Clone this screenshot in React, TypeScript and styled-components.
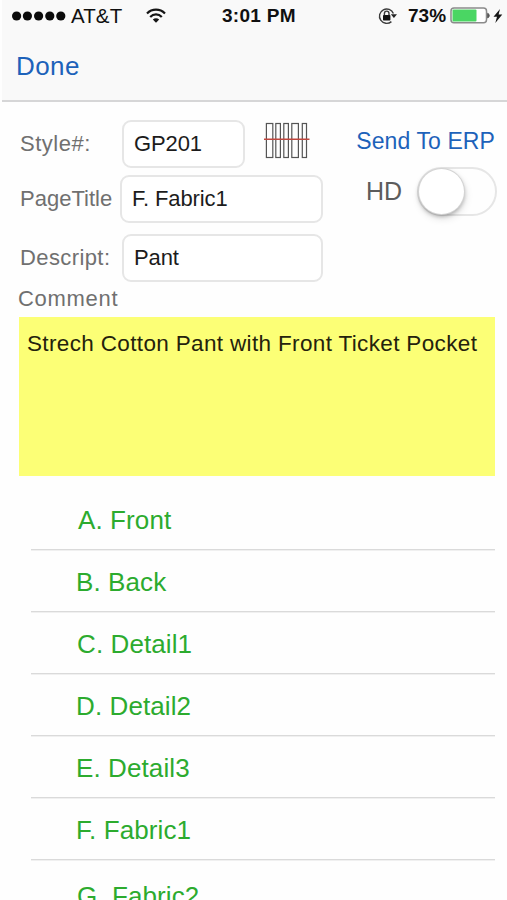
import React from "react";
import styled, { createGlobalStyle } from "styled-components";

const GlobalStyle = createGlobalStyle`
  * { box-sizing: border-box; }
  body { margin: 0; background: #fefefe; overflow: hidden; }
`;

const Screen = styled.div`
  width: 507px;
  height: 900px;
  overflow: hidden;
  display: flex;
  flex-direction: column;
  background: #fefefe;
  font-family: "Liberation Sans", Arial, sans-serif;
`;

const Header = styled.header`
  flex: none;
  height: 102px;
  margin-left: 2px;
  background: #f9f9f9;
  border-bottom: 2px solid #d6d6d7;
`;

const StatusBar = styled.div`
  height: 31px;
  display: flex;
  align-items: center;
  padding-left: 10px;
  color: #101010;
`;

const Carrier = styled.span`
  width: 54px;
  margin: 0 21px 0 5px;
  font-size: 20.5px;
  line-height: 31px;
  letter-spacing: 0.1px;
`;

const StatusText = styled.span<{ $width: number; $gap: number; $spacing: number }>`
  flex: none;
  width: ${(p) => p.$width}px;
  margin-left: ${(p) => p.$gap}px;
  font-size: 19px;
  line-height: 31px;
  font-weight: bold;
  letter-spacing: ${(p) => p.$spacing}px;
  white-space: nowrap;
`;

const Icon = styled.svg<{ $gap?: number }>`
  flex: none;
  display: block;
  margin-left: ${(p) => p.$gap ?? 0}px;
`;

const LinkButton = styled.button<{ $size: number; $spacing?: number }>`
  padding: 0;
  border: 0;
  background: none;
  color: #1d62ba;
  font-family: inherit;
  font-size: ${(p) => p.$size}px;
  line-height: 30px;
  letter-spacing: ${(p) => p.$spacing ?? 0}px;
  white-space: nowrap;
`;

const NavBar = styled.nav`
  padding: 20px 0 0 14px;
`;

const Form = styled.section`
  flex: none;
  height: 183px;
  padding: 18px 10px 0 20px;
  display: flex;
  justify-content: space-between;
`;

const Fields = styled.div`
  display: flex;
  flex-direction: column;
`;

const FieldRow = styled.div<{ $gap?: number }>`
  display: flex;
  align-items: center;
  height: 48px;
  margin-top: ${(p) => p.$gap ?? 0}px;
`;

const Label = styled.label<{ $width?: number; $spacing?: number }>`
  display: block;
  width: ${(p) => (p.$width ? `${p.$width}px` : "auto")};
  color: #707070;
  font-size: 22px;
  line-height: 28px;
  letter-spacing: ${(p) => p.$spacing ?? 0}px;
  white-space: nowrap;
`;

const Field = styled.div<{ $width: number }>`
  width: ${(p) => p.$width}px;
  height: 48px;
  padding-left: 10px;
  border: 2px solid #e6e6e6;
  border-radius: 9px;
  background: #fff;
  color: #1c1c1c;
  font-size: 22px;
  line-height: 43px;
  letter-spacing: -0.1px;
  white-space: nowrap;
`;

const BarcodeSlot = styled.div`
  align-self: flex-start;
  padding: 1px 0 0 19px;
`;

const Actions = styled.div`
  display: flex;
  flex-direction: column;
  align-items: flex-end;
  padding-top: 6px;
`;

const ErpSlot = styled.div`
  padding-right: 2px;
`;

const SwitchRow = styled.div`
  display: flex;
  align-items: center;
  gap: 15px;
  margin-top: 10px;
`;

const SwitchLabel = styled.span`
  color: #5c5c5c;
  font-size: 25px;
  line-height: 50px;
`;

const Track = styled.div`
  width: 80px;
  height: 49px;
  padding-left: 1px;
  display: flex;
  align-items: center;
  border: 2px solid #e6e6e6;
  border-radius: 25px;
  background: #fefefe;
`;

const Knob = styled.div`
  width: 45px;
  height: 45px;
  margin-left: -1px;
  border-radius: 50%;
  background: #fff;
  box-shadow: 0 0 0 1px #d4d4d4, 0 2px 4px rgba(0, 0, 0, 0.3), 1px 4px 9px rgba(0, 0, 0, 0.14);
`;

const CommentLabel = styled.div`
  flex: none;
  height: 32px;
  padding-left: 18px;
`;

const CommentBox = styled.div`
  flex: none;
  width: 476px;
  height: 159px;
  margin-left: 19px;
  padding: 13px 8px;
  background: #fcff76;
  color: #24220c;
  font-size: 22.5px;
  line-height: 28px;
  letter-spacing: 0.35px;
  white-space: nowrap;
`;

const List = styled.ul`
  flex: none;
  margin: 0 12px 0 31px;
  padding: 12px 0 0;
  list-style: none;
`;

const Item = styled.li<{ $x: number; $drop?: number }>`
  height: 62px;
  padding: ${(p) => 16 + (p.$drop ?? 0)}px 0 0 ${(p) => p.$x}px;
  border-bottom: 1px solid #dadada;
  box-shadow: 0 1px 0 #f0f0f0;
  color: #2cab2e;
  font-size: 26px;
  line-height: 32px;
  letter-spacing: 0.1px;
  white-space: nowrap;
`;

const SignalIcon = () => (
  <Icon width="54" height="12" fill="#0b0b0b">
    {[4.6, 15.4, 26.6, 37.8, 48.8].map((x) => (
      <circle key={x} cx={x} cy="6" r="4.6" />
    ))}
  </Icon>
);

const WifiIcon = () => (
  <Icon width="20" height="16" viewBox="0 0 20 16" fill="none" stroke="#151515" strokeWidth="2.2">
    <path d="M1 5.5C6 .4 14 .4 19 5.5" />
    <path d="M4.2 9C7.5 5.5 12.5 5.5 15.8 9" />
    <path d="M6.8 11.6C8.7 9.8 11.3 9.8 13.2 11.6L10 14.8Z" fill="#151515" stroke="none" />
  </Icon>
);

const LockIcon = () => (
  <Icon $gap={81} width="19" height="18" viewBox="0 0 19 18" fill="none" stroke="#3b3b3b" strokeWidth="1.4">
    <path d="M15.4 6.6A7.2 7.2 0 1 0 13.4 14.6" />
    <path d="M12.8 7.2H19L15.9 11Z" fill="#222" stroke="none" />
    <rect x="5" y="8" width="7.4" height="5.5" rx=".7" fill="#111" stroke="none" />
    <path d="M6.4 8.2V6.4a2.3 2.3 0 0 1 4.6 0v1.8" />
  </Icon>
);

const BatteryIcon = () => (
  <Icon $gap={3} width="41" height="17" viewBox="0 0 41 17">
    <rect x="1" y="1" width="35.5" height="14.8" rx="3" fill="#fff" stroke="#8b8b8b" strokeWidth="1.5" />
    <rect x="2.5" y="2.4" width="24" height="12" rx="1" fill="#4ad663" />
    <path d="M37.7 6.3a2.5 2.5 0 0 1 0 4.6z" fill="#555" stroke="#555" />
  </Icon>
);

const BoltIcon = () => (
  <Icon $gap={2} width="10" height="16" viewBox="0 0 10 16" fill="#161616">
    <path d="M7 1 .5 8.8H4L2.3 15 9.3 6.6H5.6Z" />
  </Icon>
);

const BarcodeIcon = () => (
  <Icon width="46" height="38" viewBox="264 121 46 38" fill="none">
    <g stroke="#555" strokeWidth="1.2">
      <rect x="266.4" y="123.5" width="6.4" height="34" />
      <rect x="275.8" y="123.5" width="4.6" height="34" />
      <rect x="283.8" y="123.5" width="4.6" height="34" />
      <rect x="291.8" y="123.5" width="6.6" height="34" />
      <rect x="302.3" y="123.5" width="4.2" height="34" />
    </g>
    <path d="M264 139.3h45.5" stroke="#c0473e" strokeWidth="1.4" />
  </Icon>
);

const items = [
  { text: "A. Front", x: 47 },
  { text: "B. Back", x: 45 },
  { text: "C. Detail1", x: 46 },
  { text: "D. Detail2", x: 45 },
  { text: "E. Detail3", x: 45 },
  { text: "F. Fabric1", x: 45 },
  { text: "G. Fabric2", x: 46, drop: 4 },
];

export default function App() {
  return (
    <>
      <GlobalStyle />
      <Screen>
        <Header>
          <StatusBar>
            <SignalIcon />
            <Carrier>AT&amp;T</Carrier>
            <WifiIcon />
            <StatusText $width={75} $gap={56} $spacing={0.3}>3:01 PM</StatusText>
            <LockIcon />
            <StatusText $width={39} $gap={11} $spacing={0}>73%</StatusText>
            <BatteryIcon />
            <BoltIcon />
          </StatusBar>
          <NavBar>
            <LinkButton $size={26} $spacing={0.4}>Done</LinkButton>
          </NavBar>
        </Header>
        <Form>
          <Fields>
            <FieldRow>
              <Label $width={102} $spacing={0.5}>Style#:</Label>
              <Field $width={123}>GP201</Field>
              <BarcodeSlot>
                <BarcodeIcon />
              </BarcodeSlot>
            </FieldRow>
            <FieldRow $gap={7}>
              <Label $width={100}>PageTitle</Label>
              <Field $width={203}>F. Fabric1</Field>
            </FieldRow>
            <FieldRow $gap={11}>
              <Label $width={102} $spacing={0.4}>Descript:</Label>
              <Field $width={201}>Pant</Field>
            </FieldRow>
          </Fields>
          <Actions>
            <ErpSlot>
              <LinkButton $size={23} $spacing={0.1}>Send To ERP</LinkButton>
            </ErpSlot>
            <SwitchRow>
              <SwitchLabel>HD</SwitchLabel>
              <Track>
                <Knob />
              </Track>
            </SwitchRow>
          </Actions>
        </Form>
        <CommentLabel>
          <Label $spacing={0.7}>Comment</Label>
        </CommentLabel>
        <CommentBox>Strech Cotton Pant with Front Ticket Pocket</CommentBox>
        <List>
          {items.map((item) => (
            <Item key={item.text} $x={item.x} $drop={item.drop}>
              {item.text}
            </Item>
          ))}
        </List>
      </Screen>
    </>
  );
}
